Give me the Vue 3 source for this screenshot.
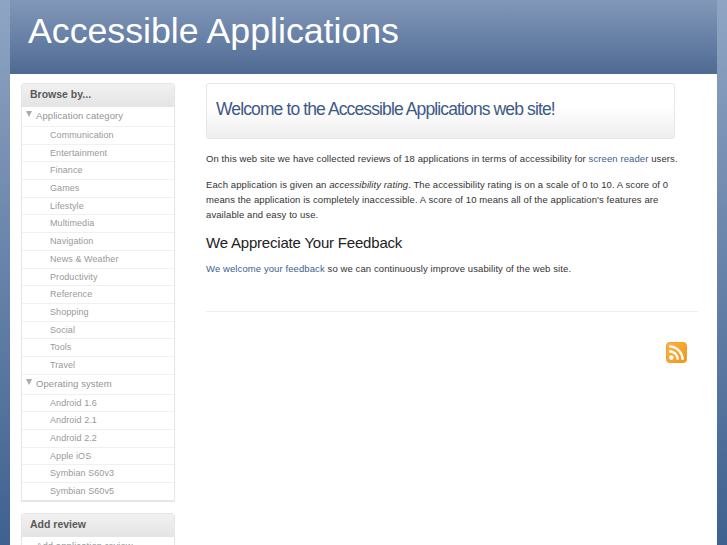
<script setup>
const groups = [
  { title: 'Application category', items: ['Communication','Entertainment','Finance','Games','Lifestyle','Multimedia','Navigation','News & Weather','Productivity','Reference','Shopping','Social','Tools','Travel'] },
  { title: 'Operating system', items: ['Android 1.6','Android 2.1','Android 2.2','Apple iOS','Symbian S60v3','Symbian S60v5'] },
]
</script>

<template>
  <div class="page">
    <header class="banner"><h1>Accessible Applications</h1></header>
    <div class="body">
      <aside class="side">
        <section class="box">
          <h3>Browse by...</h3>
          <template v-for="g in groups" :key="g.title">
            <div class="group"><span class="tri"></span>{{ g.title }}</div>
            <div v-for="i in g.items" :key="i" class="item">{{ i }}</div>
          </template>
        </section>
        <section class="box">
          <h3>Add review</h3>
          <div class="group plain">Add application review</div>
        </section>
      </aside>
      <main class="main">
        <div class="hero"><h2>Welcome to the Accessible Applications web site!</h2></div>
        <p>On this web site we have collected reviews of 18 applications in terms of accessibility for <a>screen reader</a> users.</p>
        <p>Each application is given an <em>accessibility rating</em>. The accessibility rating is on a scale of 0 to 10. A score of 0 means the application is completely inaccessible. A score of 10 means all of the application's features are available and easy to use.</p>
        <h4>We Appreciate Your Feedback</h4>
        <p><a>We welcome your feedback</a> so we can continuously improve usability of the web site.</p>
        <div class="rule"></div>
        <div class="feed">
          <svg width="21" height="21" viewBox="0 0 21 21" aria-hidden="true">
            <defs>
              <linearGradient id="rssg" x1="0" y1="0" x2="1" y2="1">
                <stop offset="0" stop-color="#fcb44a"/>
                <stop offset="1" stop-color="#f39414"/>
              </linearGradient>
            </defs>
            <rect x="0.5" y="0.5" width="20" height="20" rx="3" fill="url(#rssg)" stroke="#efa033"/>
            <circle cx="5.4" cy="15.6" r="2.3" fill="#fff"/>
            <path d="M3.2 9.2a8.6 8.6 0 0 1 8.6 8.6" fill="none" stroke="#fff" stroke-width="2.4"/>
            <path d="M3.2 4.4a13.4 13.4 0 0 1 13.4 13.4" fill="none" stroke="#fff" stroke-width="2.4"/>
          </svg>
        </div>
      </main>
    </div>
  </div>
</template>

<style>
html, body { margin: 0; height: 100%; overflow: hidden; }
body { background: linear-gradient(#8fa5c3 0, #7d95b7 120px, #3f618f 545px); }
</style>

<style scoped>
.page { margin: 0 10px; height: 545px; overflow: hidden; background: #fff; font-family: "Liberation Sans", Arial, sans-serif; }
.banner { height: 74px; box-sizing: border-box; padding: 11px 0 0 18px; background: linear-gradient(#8298b9, #4f6a93); }
h1 { margin: 0; font-size: 35.7px; line-height: 40px; font-weight: 400; color: #fff; }
.body { display: flex; align-items: flex-start; padding: 9px 19px 0 11px; }
.side { width: 154px; flex: none; display: flex; flex-direction: column; gap: 12px; }
.box { border: 1px solid #e6e6e6; border-radius: 3px 3px 0 0; box-shadow: 0 1px 1px #e4e4e4; }
.box h3 { margin: 0; height: 23px; padding-left: 8px; font-size: 10.5px; line-height: 21px; font-weight: 700; color: #5a5a5a; background: linear-gradient(#f1f1f1, #e4e4e4); }
.group { position: relative; height: 19px; padding-left: 14px; font-size: 9.5px; line-height: 18px; color: #949494; letter-spacing: .08px; border-bottom: 1px solid #f0f0f0; }
.plain { padding-left: 14px; }
.tri { position: absolute; left: 4px; top: 4px; border: 3.5px solid transparent; border-top: 6px solid #aaa; border-bottom: 0; }
.item { height: 16.7px; padding-left: 28px; font-size: 9px; line-height: 16.7px; color: #999; letter-spacing: .08px; border-bottom: 1px solid #f0f0f0; }
.item:last-of-type { border-bottom: 0; }
.main { flex: 1; margin-left: 31px; min-width: 0; }
.hero { width: 469px; height: 56px; box-sizing: border-box; border: 1px solid #e6e6e6; border-radius: 3px; padding: 15px 0 0 9px; background: linear-gradient(#fff 40%, #eeeeee); }
h2 { margin: 0; font-size: 17.5px; line-height: 21px; font-weight: 400; letter-spacing: -.88px; color: #3d5a85; }
p { margin: 0 0 11px; font-size: 9.5px; line-height: 15px; color: #333; letter-spacing: .095px; max-width: 480px; }
.hero + p { margin-top: 12px; }
a { color: #3d5f8f; }
h4 { margin: 12px 0 9px; font-size: 15px; line-height: 18px; font-weight: 400; letter-spacing: -.2px; color: #222; }
.rule { border-top: 1px solid #eeeeee; margin-top: 35px; }
.feed { display: flex; justify-content: flex-end; margin: 30px 11px 0 0; }
</style>
